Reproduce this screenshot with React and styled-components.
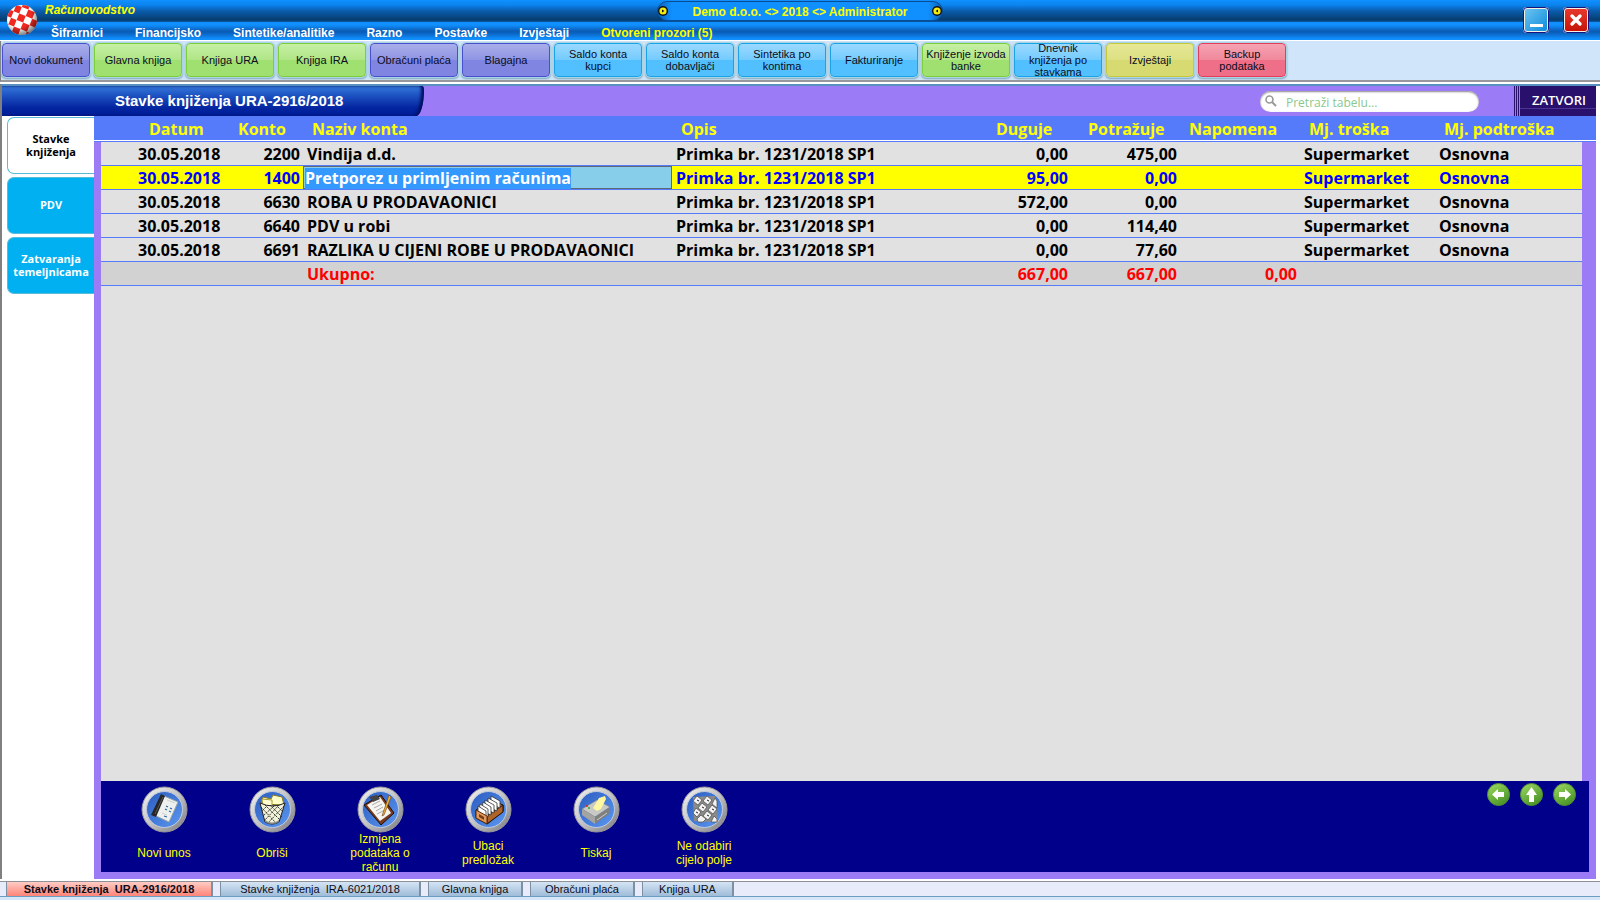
import { useState } from "react";
import styled, { createGlobalStyle, css } from "styled-components";

const sans = `"Liberation Sans", Arial, sans-serif`;
const ui = `"Open Sans", "Segoe UI", sans-serif`;

const tones = {
  violet: ["#a9aeea", "#8f94e4", "#7f85e0", "#4850d0"],
  green: ["#c6f0a4", "#b0e586", "#9fe070", "#7ccf3a"],
  sky: ["#9ad9ff", "#74cbff", "#52c0ff", "#1ba3e8"],
  olive: ["#e6e896", "#dde082", "#d6da70", "#c6c83c"],
  red: ["#f5a3b2", "#f0889b", "#ee6f87", "#e63c5c"],
};

const menu = [
  "Šifrarnici",
  "Financijsko",
  "Sintetike/analitike",
  "Razno",
  "Postavke",
  "Izvještaji",
];

const shortcuts = [
  { name: "Novi dokument", tone: "violet" },
  { name: "Glavna knjiga", tone: "green" },
  { name: "Knjiga URA", tone: "green" },
  { name: "Knjiga IRA", tone: "green" },
  { name: "Obračuni plaća", tone: "violet" },
  { name: "Blagajna", tone: "violet" },
  { name: "Saldo konta kupci", tone: "sky" },
  { name: "Saldo konta dobavljači", tone: "sky" },
  { name: "Sintetika po kontima", tone: "sky" },
  { name: "Fakturiranje", tone: "sky" },
  { name: "Knjiženje izvoda banke", tone: "green" },
  { name: "Dnevnik knjiženja po stavkama", tone: "sky" },
  { name: "Izvještaji", tone: "olive" },
  { name: "Backup podataka", tone: "red" },
];

const sideTabs = ["Stavke knjiženja", "PDV", "Zatvaranja temeljnicama"];

const columns = [
  { key: "datum", name: "Datum", width: 123, indent: 48, pad: 37 },
  { key: "konto", name: "Konto", width: 79, indent: 14, right: true },
  { key: "naziv", name: "Naziv konta", width: 369, indent: 9 },
  { key: "opis", name: "Opis", width: 288, indent: 9 },
  { key: "duguje", name: "Duguje", width: 111, indent: 36, right: true },
  { key: "potrazuje", name: "Potražuje", width: 109, indent: 17, right: true },
  { key: "napomena", name: "Napomena", width: 120, indent: 9, right: true },
  { key: "trosak", name: "Mj. troška", width: 135, indent: 9 },
  { key: "podtrosak", name: "Mj. podtroška", indent: 9 },
];

const entry = (konto, naziv, duguje, potrazuje) => ({
  datum: "30.05.2018",
  konto,
  naziv,
  opis: "Primka br. 1231/2018 SP1",
  duguje,
  potrazuje,
  trosak: "Supermarket",
  podtrosak: "Osnovna",
});

const entries = [
  entry("2200", "Vindija d.d.", "0,00", "475,00"),
  entry("1400", "Pretporez u primljenim računima", "95,00", "0,00"),
  entry("6630", "ROBA U PRODAVAONICI", "572,00", "0,00"),
  entry("6640", "PDV u robi", "0,00", "114,40"),
  entry("6691", "RAZLIKA U CIJENI ROBE U PRODAVAONICI", "0,00", "77,60"),
];

const totals = {
  naziv: "Ukupno:",
  duguje: "667,00",
  potrazuje: "667,00",
  napomena: "0,00",
};

const windows = [
  { name: "Stavke knjiženja  URA-2916/2018", width: 207 },
  { name: "Stavke knjiženja  IRA-6021/2018", width: 201 },
  { name: "Glavna knjiga", width: 95 },
  { name: "Obračuni plaća", width: 105 },
  { name: "Knjiga URA", width: 92 },
];

// Icons

const BallIcon = () => (
  <svg width="32" height="32" viewBox="0 0 32 32">
    <defs>
      <clipPath id="ball">
        <circle cx="16" cy="16" r="15" />
      </clipPath>
      <radialGradient id="ballShade" cx="0.4" cy="0.35" r="0.65">
        <stop offset="0.6" stopColor="#000" stopOpacity="0" />
        <stop offset="1" stopColor="#000" stopOpacity="0.55" />
      </radialGradient>
    </defs>
    <g clipPath="url(#ball)">
      <rect width="32" height="32" fill="#fff" />
      <g fill="#f02820" transform="rotate(22 16 16)">
        <path d="M-1 -1h6v5h-6zM11 -1h7v5h-7zM25 -1h6v5h-6z" />
        <path d="M5 4h6v7h-6zM18 4h7v7h-7zM-1 11h6v7h-6zM11 11h7v7h-7zM25 11h8v7h-8z" />
        <path d="M5 18h6v7h-6zM18 18h7v7h-7zM-1 25h6v8h-6zM11 25h7v8h-7zM25 25h6v8h-6z" />
      </g>
      <rect width="32" height="32" fill="url(#ballShade)" />
    </g>
  </svg>
);

const PinIcon = ({ flip }) => (
  <svg width="10" height="10" viewBox="0 0 10 10">
    <circle cx="5" cy="5" r="5" fill="#111" />
    <circle cx="5" cy="5" r="3.6" fill="#f4ec10" />
    <path d={flip ? "M6 3.4v3.2l-2.4-1.6z" : "M4 3.4v3.2l2.4-1.6z"} fill="#111" />
  </svg>
);

const MinimizeIcon = () => (
  <svg width="16" height="16" viewBox="0 0 16 16">
    <rect x="2" y="12" width="13" height="3" fill="#fff" />
  </svg>
);

const CloseIcon = () => (
  <svg width="16" height="16" viewBox="0 0 16 16">
    <path
      d="M4 4l8 8M12 4L4 12"
      stroke="#fff"
      strokeWidth="3.4"
      strokeLinecap="round"
    />
  </svg>
);

const SearchIcon = () => (
  <svg width="12" height="12" viewBox="0 0 12 12">
    <circle cx="4.5" cy="4.5" r="3.5" fill="none" stroke="#999" strokeWidth="1.6" />
    <path d="M7 7l4 4" stroke="#999" strokeWidth="2" />
  </svg>
);

const NotebookArt = () => (
  <g>
    <path d="M23 10L37 16L28 36L13 29z" fill="#eef0ee" stroke="#9aa6a6" />
    <path d="M20 8L24 10L15 31L10 29z" fill="#262626" />
    <path d="M22 11L14 28" stroke="#777" strokeWidth="0.6" />
    <path
      d="M25 20l2 1M29 22l2 1M24 23l2 1M28 25l2 1M23 30l3 1"
      stroke="#2b66a8"
      strokeWidth="1.2"
    />
    <path d="M26 14l8 3M21 27l5 2" stroke="#c4cccc" strokeWidth="0.8" />
  </g>
);

const BinArt = () => (
  <g>
    <path d="M12 18L14 11L22 13L24 9L33 11L35 19z" fill="#ffffc8" stroke="#8a7a20" />
    <path d="M13 13l10 1v6h-9z" fill="#fffdd0" stroke="#a89a30" />
    <path d="M11 17L16 36Q23 40 30 36L36 17Q24 23 11 17z" fill="#f2f2d8" stroke="#222" />
    <path
      d="M12 21l15 16M16 19l15 15M21 19l12 12M27 19l7 7M35 20L19 37M30 19L16 34M25 20L14 30M19 19l-6 6"
      stroke="#333"
      strokeWidth="1"
      strokeDasharray="2 1"
    />
    <path d="M16 34Q23 39 30 34L30 36Q23 40 16 36z" fill="#888" />
  </g>
);

const ClipboardArt = () => (
  <g>
    <path d="M7 19L24 9L37 27L24 39z" fill="#7a3a1c" stroke="#1c0e08" />
    <path d="M10 19L23 11L34 27L23 35z" fill="#f4f4f0" />
    <path d="M15 19l8-4M17 22l8-4M19 25l7-4M20 28l8-4" stroke="#aaa" />
    <path d="M12 11l8-2l3 4l-7 3z" fill="#444" />
    <path d="M32 9L34 11L27 29L25 30L26 27z" fill="#f0b030" stroke="#704010" strokeWidth="0.6" />
  </g>
);

const CardBoxArt = () => (
  <g>
    <path d="M11 24L27 14L38 19L38 25L22 38L11 32z" fill="#d98a4a" stroke="#1c0e08" />
    <path d="M22 30L38 19L38 26L22 38z" fill="#b06428" stroke="#1c0e08" />
    <g fill="#fff" stroke="#333" strokeWidth="0.8">
      <path d="M26 10l9 5v7l-9-4z" />
      <path d="M23 12l9 5v8l-9-4z" />
      <path d="M20 14l9 5v8l-9-4z" />
      <path d="M18 16l8 5v8l-9-4z" />
      <path d="M15 18l8 5v8l-9-4z" />
      <path d="M13 20l8 5v7l-8-4z" />
    </g>
    <path d="M11 24L22 30V38L11 32z" fill="#e09a5c" stroke="#5a2c10" />
    <path d="M14 28l5 3v3l-5-3z" fill="#7a3c14" />
  </g>
);

const PrinterArt = () => (
  <g>
    <path d="M9 23L24 14L37 21L22 31z" fill="#c8c8c4" stroke="#777" strokeWidth="0.5" />
    <path d="M9 23L22 31V38L9 29z" fill="#a4a4a0" />
    <path d="M22 31L37 21V27L22 38z" fill="#80807e" />
    <path d="M20 22L26 12L32 10L33 13L28 23L24 25z" fill="#fff8a0" />
    <path d="M24 34l10-7" stroke="#ccc" strokeWidth="1" />
    <circle cx="14" cy="20" r="1" fill="#e02020" />
    <circle cx="16" cy="22" r="1" fill="#20b020" />
  </g>
);

const KeysArt = () => (
  <g>
    <path d="M12 11L34 10L37 34L30 36L13 35z" fill="#8a8a8a" />
    <g fill="#f2f2f2" stroke="#555" strokeWidth="0.8">
      <path d="M16 10l5 4l-4 5l-5-4z" />
      <path d="M26 10l5 4l-4 5l-5-4z" />
      <path d="M34 12l2 3v7l-5-4z" />
      <path d="M21 17l5 4l-4 5l-5-4z" />
      <path d="M31 19l5 4l-4 5l-5-4z" />
      <path d="M15 22l5 4l-4 5l-4-4z" />
      <path d="M26 25l5 4l-4 5l-5-4z" />
      <path d="M20 29l5 4l-3 3h-5l-1-3z" />
      <path d="M33 30l3 3v3h-6z" />
    </g>
    <path d="M16 14l2 1M26 14l2 1M21 21l2 1M31 23l2 1M15 26l2 1M26 29l2 1" stroke="#222" />
  </g>
);

const RoundIcon = ({ id, children }) => (
  <svg width="47" height="47" viewBox="0 0 47 47">
    <defs>
      <linearGradient id={`rim-${id}`} x1="0" y1="0" x2="1" y2="1">
        <stop offset="0" stopColor="#f4f4f4" />
        <stop offset="0.5" stopColor="#c4c4c6" />
        <stop offset="1" stopColor="#77777c" />
      </linearGradient>
      <linearGradient id={`disc-${id}`} x1="0" y1="0" x2="1" y2="1">
        <stop offset="0" stopColor="#2a5cc0" />
        <stop offset="1" stopColor="#5c98f0" />
      </linearGradient>
    </defs>
    <circle cx="23.5" cy="23.5" r="22.5" fill={`url(#rim-${id})`} stroke="#98989c" />
    <circle cx="23.5" cy="23.5" r="18" fill={`url(#disc-${id})`} stroke="#c4ccdc" />
    {children}
  </svg>
);

const ArrowIcon = ({ turn }) => (
  <svg width="23" height="23" viewBox="0 0 23 23">
    <defs>
      <linearGradient id={`arrow-${turn}`} x1="0" y1="0" x2="0.6" y2="1">
        <stop offset="0" stopColor="#a4dc68" />
        <stop offset="0.5" stopColor="#74b844" />
        <stop offset="1" stopColor="#4c9428" />
      </linearGradient>
    </defs>
    <circle cx="11.5" cy="11.5" r="11" fill={`url(#arrow-${turn})`} stroke="#4f8f34" />
    <path
      d={turn === 90 ? "M4 11.5L12 6V9H19V14H12V17z" : "M5 11.5L11 6V9H17V14H11V17z"}
      fill="#fff"
      transform={`rotate(${turn} 11.5 11.5)`}
    />
  </svg>
);

const actions = [
  { name: "Novi unos", art: <NotebookArt /> },
  { name: "Obriši", art: <BinArt /> },
  { name: "Izmjena podataka o računu", art: <ClipboardArt /> },
  { name: "Ubaci predložak", art: <CardBoxArt /> },
  { name: "Tiskaj", art: <PrinterArt /> },
  { name: "Ne odabiri cijelo polje", art: <KeysArt /> },
];

const App = () => {
  const [tab, setTab] = useState(0);
  const [selected, setSelected] = useState(1);
  const [openWindow, setOpenWindow] = useState(0);

  const cell = (row, col, i) => {
    if (i === selected && col.key === "naziv") {
      return (
        <EditCell key={col.key}>
          <mark>{row.naziv}</mark>
        </EditCell>
      );
    }
    return (
      <Cell key={col.key} $right={col.right} $pad={col.pad}>
        {row[col.key]}
      </Cell>
    );
  };

  return (
    <>
      <GlobalStyle />
      <Page>
        <TitleBar>
          <BallIcon />
          <Brand>
            <AppName>Računovodstvo</AppName>
            <Menu>
              {menu.map((name) => (
                <MenuLink href="#" key={name}>
                  {name}
                </MenuLink>
              ))}
              <MenuLink href="#" $active>
                Otvoreni prozori (5)
              </MenuLink>
            </Menu>
          </Brand>
          <Session>
            <PinIcon />
            <span>{"Demo d.o.o. <> 2018 <> Administrator"}</span>
            <PinIcon flip />
          </Session>
          <WindowButtons>
            <WindowButton aria-label="Minimize">
              <MinimizeIcon />
            </WindowButton>
            <WindowButton aria-label="Close" $danger>
              <CloseIcon />
            </WindowButton>
          </WindowButtons>
        </TitleBar>

        <Toolbar>
          {shortcuts.map(({ name, tone }) => (
            <Shortcut key={name} $tone={tones[tone]}>
              {name}
            </Shortcut>
          ))}
        </Toolbar>

        <Workspace>
          <Caption>
            <CaptionTitle>Stavke knjiženja URA-2916/2018</CaptionTitle>
            <CaptionTools>
              <SearchBox>
                <SearchIcon />
                <input aria-label="Pretraži tabelu" placeholder="Pretraži tabelu..." />
              </SearchBox>
              <CloseButton>ZATVORI</CloseButton>
            </CaptionTools>
          </Caption>

          <Body>
            <SideTabs>
              {sideTabs.map((name, i) => (
                <SideTab key={name} $active={i === tab} onClick={() => setTab(i)}>
                  {name}
                </SideTab>
              ))}
            </SideTabs>

            <Panel>
              <TableArea>
                <Table>
                  <colgroup>
                    {columns.map((col) => (
                      <col key={col.key} width={col.width} />
                    ))}
                  </colgroup>
                  <thead>
                    <tr>
                      {columns.map((col) => (
                        <HeadCell key={col.key} $indent={col.indent}>
                          {col.name}
                        </HeadCell>
                      ))}
                    </tr>
                  </thead>
                  <tbody>
                    {entries.map((row, i) => (
                      <Row
                        key={row.konto}
                        $selected={i === selected}
                        onClick={() => setSelected(i)}
                      >
                        {columns.map((col) => cell(row, col, i))}
                      </Row>
                    ))}
                  </tbody>
                  <tfoot>
                    <Row $total>{columns.map((col) => cell(totals, col))}</Row>
                  </tfoot>
                </Table>
              </TableArea>

              <ActionBar>
                <Actions>
                  {actions.map(({ name, art }, i) => (
                    <Action key={name}>
                      <RoundIcon id={i}>{art}</RoundIcon>
                      <span>{name}</span>
                    </Action>
                  ))}
                </Actions>
                <Arrows>
                  <ArrowButton aria-label="Natrag">
                    <ArrowIcon turn={0} />
                  </ArrowButton>
                  <ArrowButton aria-label="Gore">
                    <ArrowIcon turn={90} />
                  </ArrowButton>
                  <ArrowButton aria-label="Naprijed">
                    <ArrowIcon turn={180} />
                  </ArrowButton>
                </Arrows>
              </ActionBar>
            </Panel>
          </Body>
        </Workspace>

        <WindowList>
          {windows.map(({ name, width }, i) => (
            <WindowTab
              key={name}
              $width={width}
              $active={i === openWindow}
              onClick={() => setOpenWindow(i)}
            >
              {name}
            </WindowTab>
          ))}
        </WindowList>
      </Page>
    </>
  );
};

const GlobalStyle = createGlobalStyle`
  * {
    box-sizing: border-box;
  }

  body {
    margin: 0;
    font-family: ${sans};
    font-size: 12px;
  }

  button {
    margin: 0;
    padding: 0;
    border: 0;
    background: none;
    font-family: inherit;
    cursor: pointer;
  }

  svg {
    display: block;
    flex-shrink: 0;
  }
`;

const Page = styled.div`
  display: flex;
  flex-direction: column;
  min-height: 100vh;
  background: #fff;
`;

const TitleBar = styled.header`
  position: relative;
  display: flex;
  align-items: center;
  height: 41px;
  padding: 0 11px 0 6px;
  border-bottom: 1px solid #fff;
  background:
    linear-gradient(#1090ff, #0b84ee 5px, #0a5cac 11px, #063c6e 20px, #0a5aa8) 0 0 / 100% 22px no-repeat,
    linear-gradient(#1090ff, #1090ff 3px, #0a5cb4 9px, #0a62c0 11px, #1090ff 17px) 0 22px / 100% 18px no-repeat;
`;

const Brand = styled.div`
  display: flex;
  flex-direction: column;
  flex: 1;
  align-self: stretch;
  padding-left: 7px;
  font-weight: bold;
  line-height: 20px;
`;

const AppName = styled.div`
  flex: none;
  height: 24px;
  color: #ffff00;
  font-style: italic;
`;

const Menu = styled.nav`
  display: flex;
  gap: 32px;
  padding-left: 6px;
`;

const MenuLink = styled.a`
  color: ${(props) => (props.$active ? "#ffff00" : "#fff")};
  line-height: 18px;
  text-decoration: none;
`;

const Session = styled.div`
  position: absolute;
  top: 1px;
  left: 50%;
  display: flex;
  align-items: center;
  justify-content: space-between;
  width: 286px;
  height: 20px;
  transform: translateX(-50%);
  border: 1px solid #0a4c94;
  border-radius: 10px;
  background: linear-gradient(90deg, #0a60b4, #1090ff 14px, #1090ff 270px, #0a60b4);
  color: #ffff00;
  font-weight: bold;
  line-height: 20px;

  span {
    padding-top: 2px;
  }
`;

const WindowButtons = styled.div`
  display: flex;
  gap: 14px;
`;

const WindowButton = styled.button`
  display: flex;
  align-items: center;
  justify-content: center;
  width: 26px;
  height: 26px;
  border: 2px solid #f4f0e4;
  border-radius: 4px;
  outline: 1px solid #14147c;
  outline-offset: -1px;
  background: ${(props) =>
    props.$danger
      ? "linear-gradient(#e8382c, #c81408)"
      : "linear-gradient(135deg, #6cc4f0, #0c8cdc)"};
`;

const Toolbar = styled.div`
  display: flex;
  gap: 4px;
  height: 41px;
  padding: 2px 1px 0;
  border-bottom: 2px solid #98989c;
  border-left: 1px solid #808080;
  background: #d0e5f9;
`;

const Shortcut = styled.button`
  display: flex;
  align-items: center;
  justify-content: center;
  width: 88px;
  height: 34px;
  padding: 0 2px;
  border: 1px solid ${(props) => props.$tone[3]};
  border-radius: 4px;
  outline: 1px solid #a8d4e4;
  background: linear-gradient(
    ${(props) => props.$tone[0]},
    ${(props) => props.$tone[1]} 50%,
    ${(props) => props.$tone[2]} 51%,
    ${(props) => props.$tone[2]}
  );
  box-shadow: 0 1px 2px 1px #7ca4b8;
  color: #0c0c20;
  font-size: 11px;
  line-height: 12px;
`;

const Workspace = styled.main`
  display: flex;
  flex-direction: column;
  flex: 1;
  margin-top: 2px;
  padding-right: 4px;
  border-top: 2px solid #5890c0;
  border-left: 2px solid #808080;
`;

const Caption = styled.div`
  display: flex;
  justify-content: space-between;
  height: 30px;
  background: #9c7bf6;
`;

const CaptionTitle = styled.h1`
  width: 422px;
  margin: 0;
  padding-left: 113px;
  border-radius: 0 2px 8px 0 / 0 4px 26px 0;
  background: linear-gradient(#3478dc, #1c50c0 10px, #0424a0 22px, #001c98);
  box-shadow: inset -3px 0 3px #001060;
  color: #fff;
  font-size: 15px;
  line-height: 30px;
`;

const CaptionTools = styled.div`
  display: flex;
  align-items: center;
  gap: 35px;
`;

const SearchBox = styled.label`
  display: flex;
  align-items: center;
  gap: 9px;
  width: 219px;
  height: 21px;
  padding: 0 5px;
  border-radius: 11px;
  background: #fff;
  box-shadow: inset 0 1px 2px #888;

  input {
    flex: 1;
    min-width: 0;
    height: 21px;
    padding: 2px 0 0;
    border: 0;
    outline: 0;
    background: none;
    font-family: ${ui};
    font-size: 12px;

    &::placeholder {
      color: #8cc88c;
      opacity: 1;
    }
  }
`;

const CloseButton = styled.button`
  align-self: stretch;
  width: 82px;
  padding: 0 0 3px 8px;
  background:
    repeating-linear-gradient(90deg, #28106c 0 1px, #9c7bf6 1px 2px) 0 0 / 6px 100% no-repeat,
    linear-gradient(#28106c 22px, #4c3494 22px, #4c3494 23px, #28106c 23px);
  color: #fff;
  font-family: ${ui};
  font-size: 13px;
  font-weight: 600;
  line-height: 26px;
`;

const Body = styled.div`
  display: flex;
  flex: 1;
`;

const SideTabs = styled.nav`
  display: flex;
  flex-direction: column;
  gap: 3px;
  width: 92px;
  padding: 1px 0 0 5px;
`;

const SideTab = styled.button`
  height: 57px;
  padding-bottom: 2px;
  border: 1px solid #58bcd8;
  border-right: 0;
  border-radius: 7px 0 0 7px;
  background: ${(props) => (props.$active ? "#fff" : "#00b0f0")};
  color: ${(props) => (props.$active ? "#000" : "#fff")};
  font-family: ${ui};
  font-size: 11px;
  font-weight: bold;
  line-height: 13px;
`;

const Panel = styled.section`
  display: flex;
  flex-direction: column;
  flex: 1;
  padding: 0 7px 7px;
  background: linear-gradient(#567bfa 24px, #fff 24px, #fff 25px, #567bfa 25px, #567bfa 26px, #9c7bf6 26px);
`;

const TableArea = styled.div`
  flex: 1;
  margin-right: 7px;
  background: linear-gradient(transparent 26px, #e1e1e1 26px);
`;

const Table = styled.table`
  width: 100%;
  border-spacing: 0;
  table-layout: fixed;
  font-family: ${ui};
  font-size: 16px;
  font-weight: bold;
  line-height: 21px;
  white-space: nowrap;

  tbody td,
  tfoot td {
    height: 24px;
    border-bottom: 1px solid #567bfa;
  }
`;

const HeadCell = styled.th`
  height: 26px;
  padding: 0 0 0 ${(props) => props.$indent}px;
  color: #ffff00;
  text-align: left;
`;

const Row = styled.tr`
  ${(props) =>
    props.$selected &&
    css`
      background: #ffff00;
      color: #0000ff;
    `}

  ${(props) =>
    props.$total &&
    css`
      background: #d2d2d2;
      color: #ff0000;
    `}
`;

const Cell = styled.td`
  padding: 2px 3px 0 ${(props) => props.$pad || 4}px;
  text-align: ${(props) => (props.$right ? "right" : "left")};
`;

const EditCell = styled.td`
  padding: 2px 2px 0;
  background: #87ceeb;
  box-shadow: inset 0 0 0 1px #606878;

  mark {
    display: block;
    width: fit-content;
    background: #3399ff;
    color: #fff;
  }
`;

const ActionBar = styled.footer`
  display: flex;
  align-items: flex-start;
  justify-content: space-between;
  height: 91px;
  padding: 5px 13px 0 23px;
  background: #00008b;
`;

const Actions = styled.div`
  display: flex;
  gap: 28px;
`;

const Action = styled.button`
  display: flex;
  flex-direction: column;
  align-items: center;
  width: 80px;
  color: #ffff00;
  font-size: 12px;
  line-height: 14px;

  span {
    display: flex;
    align-items: center;
    width: min-content;
    min-width: 62px;
    height: 40px;
    justify-content: center;
  }
`;

const Arrows = styled.div`
  display: flex;
  gap: 10px;
  margin-top: -3px;
`;

const ArrowButton = styled.button`
  width: 23px;
  height: 23px;
`;

const WindowList = styled.nav`
  display: flex;
  gap: 7px;
  height: 19px;
  padding: 0 6px 3px;
  margin-top: 2px;
  border-top: 1px solid #909098;
  background: linear-gradient(#e8ebfa 14px, #6c9cc0 14px, #6c9cc0 15px, #d4e6f8 15px);
`;

const WindowTab = styled.button`
  width: ${(props) => props.$width}px;
  height: 14px;
  border: solid #7c90a4;
  border-width: 0 2px 0 1px;
  background: ${(props) =>
    props.$active
      ? "linear-gradient(#ffccc4, #ff8478)"
      : "linear-gradient(#d4e4f4, #a0bcd8)"};
  color: #0c0c18;
  font-size: 11px;
  font-weight: ${(props) => (props.$active ? "bold" : "normal")};
  line-height: 14px;
  white-space: pre;
`;

export default App;
